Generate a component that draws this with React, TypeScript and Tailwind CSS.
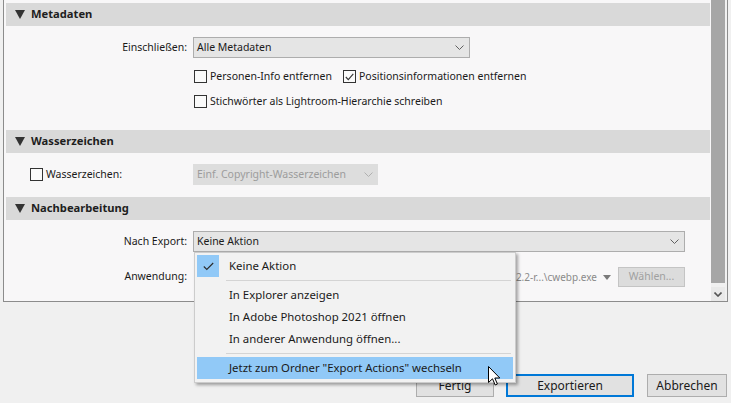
import React from "react";

const Tri = () => (
  <svg width="10" height="9" viewBox="0 0 10 9" className="shrink-0">
    <polygon points="0,0 10,0 5,9" fill="#333333" />
  </svg>
);

const Chevron = ({ color = "#606060" }: { color?: string }) => (
  <svg width="9" height="5" viewBox="0 0 9 5" className="shrink-0">
    <polyline points="0.5,0.5 4.5,4.5 8.5,0.5" fill="none" stroke={color} strokeWidth="1" />
  </svg>
);

const Box = ({ checked = false }: { checked?: boolean }) => (
  <span className="w-[13px] h-[13px] border border-[#333333] bg-[#fafafa] flex items-center justify-center shrink-0">
    {checked && (
      <svg width="9" height="8" viewBox="0 0 9 8">
        <polyline points="0.8,4 3.3,6.6 8.3,0.8" fill="none" stroke="#333333" strokeWidth="1.1" />
      </svg>
    )}
  </span>
);

const Header = ({ title }: { title: string }) => (
  <div className="h-[23px] bg-[#d9d9d9] flex items-center pl-[9px] gap-[6px]">
    <Tri />
    <span className="font-bold text-[11.2px] text-[#1e1e1e]">{title}</span>
  </div>
);

const Label = ({ children }: { children: React.ReactNode }) => (
  <span className="w-[182px] text-right pr-[1px] shrink-0">{children}</span>
);

export default function App() {
  return (
    <div className="relative w-[731px] h-[403px] bg-[#f0f0f0] overflow-hidden font-['Noto_Sans',sans-serif] text-[10.5px] text-[#1a1a1a]">
      {/* scrolling panel */}
      <div className="ml-[3px] w-[725px] h-[302px] flex border-x border-b border-[#8c8c8c] bg-[#f0f0f0]">
        <div className="w-[707px] h-full bg-[#f8f7f8] pl-[2px] pr-[1px] pt-[3px] flex flex-col">
          <Header title="Metadaten" />
          <div className="h-[104px] pt-[11px] flex flex-col">
            <div className="h-[21px] flex items-center gap-[5px]">
              <Label>Einschließen:</Label>
              <div className="w-[277px] h-[21px] bg-[#e5e5e5] border border-[#adadad] flex items-center justify-between pl-[3px] pr-[5px]">
                <span>Alle Metadaten</span>
                <Chevron />
              </div>
            </div>
            <div className="h-[25px] mt-[6px] flex items-center pl-[188px]">
              <Box />
              <span className="ml-[3px]">Personen-Info entfernen</span>
              <span className="ml-[11px]">
                <Box checked />
              </span>
              <span className="ml-[3px]">Positionsinformationen entfernen</span>
            </div>
            <div className="h-[25px] flex items-center pl-[188px]">
              <Box />
              <span className="ml-[3px]">Stichwörter als Lightroom-Hierarchie schreiben</span>
            </div>
          </div>

          <Header title="Wasserzeichen" />
          <div className="h-[44px] pt-[11px]">
            <div className="h-[21px] flex items-center">
              <span className="ml-[24px]">
                <Box />
              </span>
              <span className="ml-[3px] w-[147px]">Wasserzeichen:</span>
              <div className="w-[185px] h-[21px] bg-[#dddddd] flex items-center justify-between pl-[4px] pr-[5px] text-[#9c9c9c]">
                <span>Einf. Copyright-Wasserzeichen</span>
                <Chevron color="#b0b0b0" />
              </div>
            </div>
          </div>

          <Header title="Nachbearbeitung" />
          <div className="flex-1 pt-[11px] flex flex-col">
            <div className="h-[21px] flex items-center gap-[5px]">
              <Label>Nach Export:</Label>
              <div className="w-[492px] h-[21px] bg-[#e5e5e5] border border-[#adadad] flex items-center justify-between pl-[3px] pr-[5px]">
                <span>Keine Aktion</span>
                <Chevron />
              </div>
            </div>
            <div className="h-[20px] mt-[15px] flex items-center gap-[5px]">
              <Label>Anwendung:</Label>
              <div className="w-[404px] overflow-hidden flex justify-end text-[#8a8a8a] text-[10px] whitespace-nowrap">
                C:\Programme\libwebp-1.2.2-r...\cwebp.exe
              </div>
              <svg width="8" height="5" viewBox="0 0 8 5" className="ml-[1px] shrink-0">
                <polygon points="0,0 8,0 4,5" fill="#7a7a7a" />
              </svg>
              <div className="ml-[2px] w-[67px] h-[20px] bg-[#dcdcdc] border border-[#c4c4c4] flex items-center justify-center text-[#a0a0a0]">
                Wählen...
              </div>
            </div>
          </div>
        </div>
        {/* scrollbar */}
        <div className="w-[14px] h-full flex flex-col">
          <div className="h-[283px] bg-[#a6a6a6]" />
          <div className="flex-1" />
          <div className="h-[14px] bg-[#e9e9e9] flex items-center justify-center">
            <svg width="8" height="5" viewBox="0 0 8 5">
              <polyline points="0.5,0.5 4,4 7.5,0.5" fill="none" stroke="#555555" strokeWidth="1.6" />
            </svg>
          </div>
        </div>
      </div>

      {/* dialog buttons */}
      <div className="mt-[72px] flex justify-end pr-[4px] text-[12px]">
        <div className="w-[78px] h-[23px] bg-[#e1e1e1] border border-[#adadad] flex items-center justify-center">Fertig</div>
        <div className="ml-[12px] w-[128px] h-[23px] bg-[#e1e1e1] border-2 border-[#0078d7] flex items-center justify-center">
          Exportieren
        </div>
        <div className="ml-[13px] w-[80px] h-[23px] bg-[#e1e1e1] border border-[#adadad] flex items-center justify-center">
          Abbrechen
        </div>
      </div>

      {/* open dropdown menu */}
      <div className="absolute left-[194px] top-[252px] w-[322px] h-[131px] bg-[#f2f2f2] border border-[#cccccc] shadow-[2px_2px_3px_rgba(0,0,0,0.35)] py-[2px] px-[2px] text-[11.4px]">
        <div className="h-[22px] flex items-center">
          <div className="w-[22px] h-[22px] bg-[#91c9f7] flex items-center justify-center">
            <svg width="11" height="9" viewBox="0 0 11 9">
              <polyline points="0.8,4.5 3.8,7.5 10.2,1" fill="none" stroke="#2b2b2b" strokeWidth="1.1" />
            </svg>
          </div>
          <span className="ml-[10px]">Keine Aktion</span>
        </div>
        <div className="h-[7px] flex items-center pl-[29px] pr-[2px]">
          <div className="h-px w-full bg-[#d4d4d4]" />
        </div>
        <div className="h-[22px] flex items-center pl-[32px]">In Explorer anzeigen</div>
        <div className="h-[22px] flex items-center pl-[32px]">In Adobe Photoshop 2021 öffnen</div>
        <div className="h-[22px] flex items-center pl-[32px]">In anderer Anwendung öffnen...</div>
        <div className="h-[7px] flex items-center pl-[29px] pr-[2px]">
          <div className="h-px w-full bg-[#d4d4d4]" />
        </div>
        <div className="h-[22px] flex items-center pl-[32px] bg-[#91c9f7]">
          Jetzt zum Ordner "Export Actions" wechseln
        </div>
      </div>

      {/* mouse cursor */}
      <svg className="absolute left-[488px] top-[366px]" width="13" height="20" viewBox="0 0 13 20">
        <path d="M0.5,0.5 L0.5,16.5 L4.5,12.8 L7.2,19 L9.4,18 L6.8,12 L11.8,12 Z" fill="#ffffff" stroke="#000000" strokeWidth="1" strokeLinejoin="miter" />
      </svg>
    </div>
  );
}
